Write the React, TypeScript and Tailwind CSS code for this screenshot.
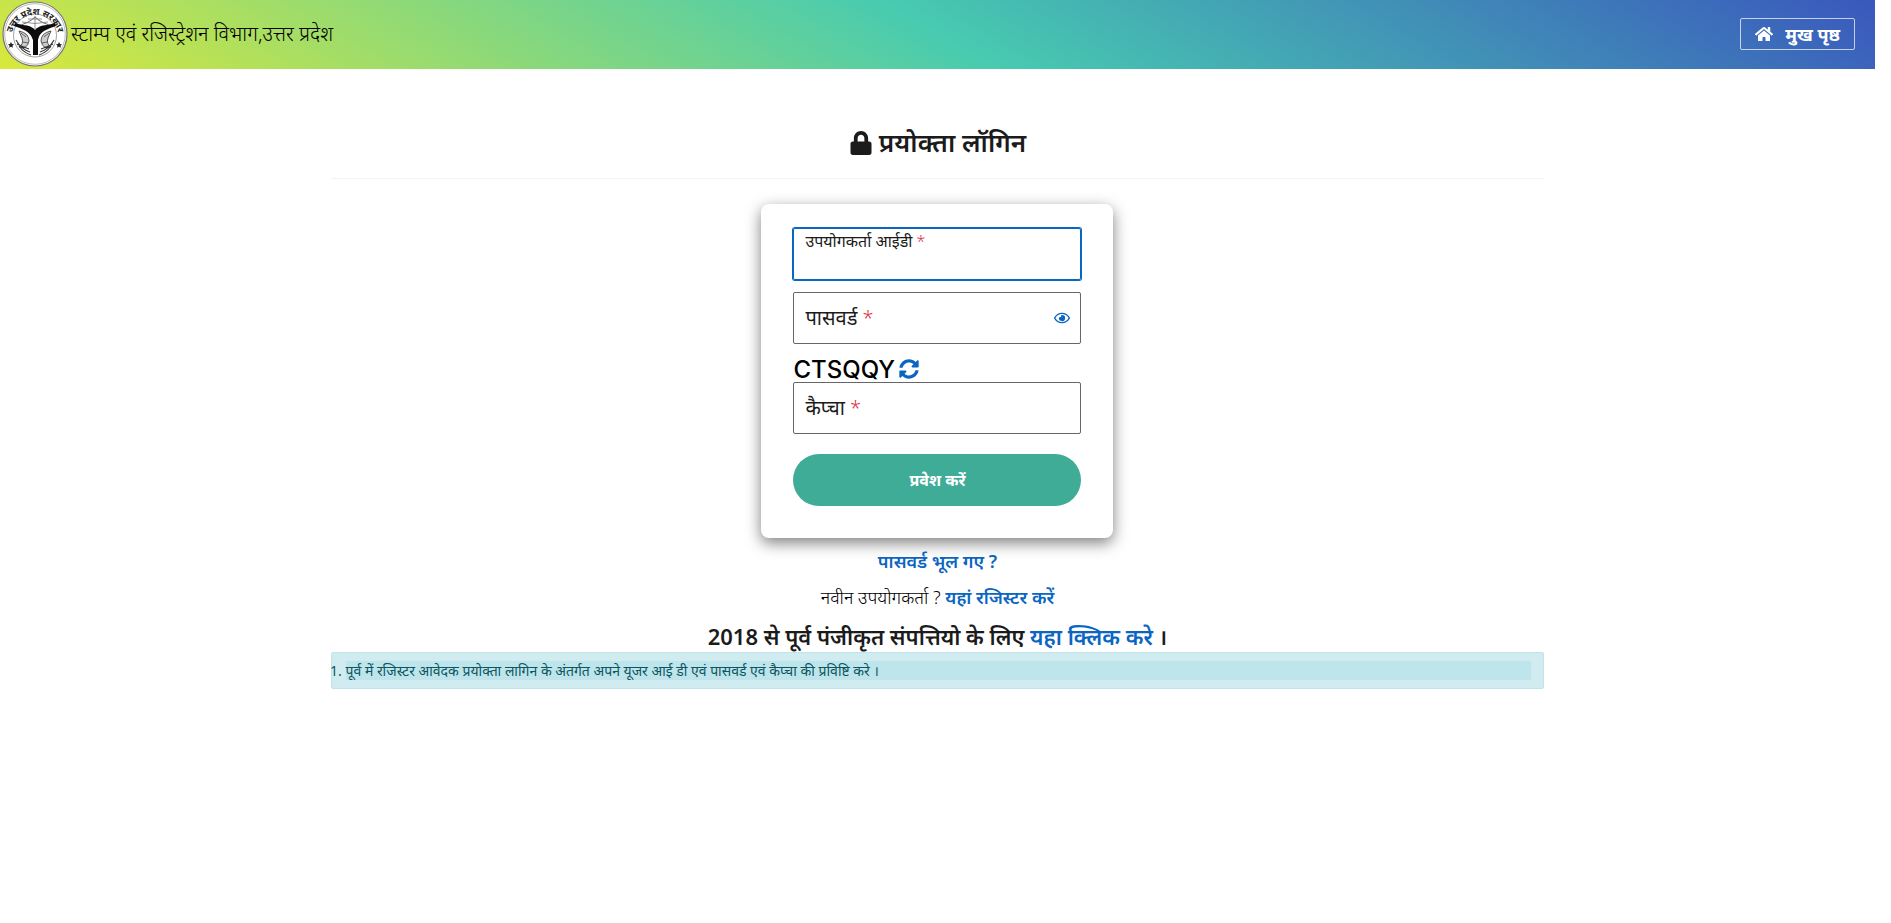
import { useState } from "react";
import { FaHome, FaLock, FaRegEye, FaSyncAlt } from "react-icons/fa";

function StateEmblem() {
  return (
    <svg viewBox="0 0 66 66" className="size-[66px] shrink-0" role="img" aria-label="उत्तर प्रदेश सरकार">
      <defs>
        <path id="ring" d="M10 42 A23.500 23.500 0 1 1 56 42" />
      </defs>
      <circle cx="33" cy="33" r="32" fill="#fff" stroke="#777" strokeWidth="1.2" />
      <circle cx="33" cy="33" r="30.3" fill="none" stroke="#aaa" strokeWidth="0.8" />
      <circle cx="33" cy="34.500" r="21.500" fill="#fff" stroke="#888" strokeWidth="0.8" />
      <text fontSize="9" fontWeight="700" fill="#222" textAnchor="middle">
        <textPath href="#ring" startOffset="50%">
          उत्तर प्रदेश सरकार
        </textPath>
      </text>
      {/* bow */}
      <path d="M14 25 Q26 23 33 16 Q40 23 52 25" fill="none" stroke="#555" strokeWidth="0.9" />
      <path d="M20 21 Q33 24 46 21 M33 15 V28 M26 18 H40" fill="none" stroke="#777" strokeWidth="0.8" />
      {/* rivers */}
      <path d="M13 22 Q19 24 25 24.500 Q31 26 33 29 Q35 26 41 24.500 Q47 24 53 22 L54 25 Q47 27 42 30 Q37 33 36 39 L36 54 H31 L31 39 Q29 33 24 30 Q19 27 12 25 Z" fill="#0c0c0c" />
      {/* fish */}
      <path d="M17 30 Q27 32 27 40 Q25 49 17 46 Q22 43 20 37 Z M49 30 Q39 32 39 40 Q41 49 49 46 Q44 43 46 37 Z" fill="#ccc" stroke="#444" strokeWidth="0.9" />
      <path d="M19 32 L24 36 M21 41 L26 42 M47 32 L42 36 M45 41 L40 42" fill="none" stroke="#555" strokeWidth="0.9" />
      <path d="M14 39 Q19 48 28 51 M52 39 Q47 48 38 51 M17 45 Q22 52 29 54 M49 45 Q44 52 37 54 M15 43 Q21 46 27 48 M51 43 Q45 46 39 48" fill="none" stroke="#333" strokeWidth="1.1" />
      <path d="M9 41 l1 2 2 .3 -1.500 1.400 .4 2 -1.900 -1 -1.900 1 .4 -2 -1.500 -1.400 2 -.3z M57 41 l1 2 2 .3 -1.500 1.400 .4 2 -1.900 -1 -1.900 1 .4 -2 -1.500 -1.400 2 -.3z" fill="#222" />
    </svg>
  );
}

function Required() {
  return <span className="font-light text-[#dc3545]">*</span>;
}

export default function App() {
  const [showPassword, setShowPassword] = useState(false);

  return (
    <div className="min-h-screen bg-white pr-4 font-['Noto_Sans','Open_Sans',sans-serif] text-[#1b1b1b]">
      <header className="flex h-[69px] items-center justify-between bg-linear-[30deg,#d9e83b,#48cbb0,#3a57bd] pr-5 pb-0.5 pl-0.5">
        <div className="flex items-center gap-[3px] text-xl font-light text-black">
          <StateEmblem />
          <span>स्टाम्प एवं रजिस्ट्रेशन विभाग,उत्तर प्रदेश</span>
        </div>
        <a
          href="#"
          className="flex h-8 items-center gap-3 rounded-xs border border-white/70 px-3.5 text-lg leading-6 font-bold text-white"
        >
          <FaHome />
          मुख पृष्ठ
        </a>
      </header>

      <main className="mx-auto flex w-2/3 flex-col items-center px-[18px] pt-12">
        <h1 className="flex h-[62px] w-full justify-center gap-1.5 border-b border-gray-100 pt-[5px] text-[26px] leading-10 font-semibold">
          <FaLock className="mt-[9px] size-6" />
          प्रयोक्ता लॉगिन
        </h1>

        <form className="mt-[25px] w-[352px] rounded-lg bg-white px-8 pt-6 pb-8 shadow-[0_5px_15px_rgba(0,0,0,0.5)]">
          <div className="relative">
            <input
              id="user"
              className="block h-[52px] w-full rounded-xs border border-[#0a66c2] px-3 pt-5 ring-1 ring-[#0a66c2] outline-none"
            />
            <label htmlFor="user" className="absolute top-px left-3 text-base leading-6">
              उपयोगकर्ता आईडी <Required />
            </label>
          </div>

          <div className="relative mt-3">
            <input
              id="password"
              type={showPassword ? "text" : "password"}
              className="block h-[52px] w-full rounded-xs border border-[#666] px-3 pt-5"
            />
            <label htmlFor="password" className="absolute top-3 left-3 text-xl">
              पासवर्ड <Required />
            </label>
            <button
              type="button"
              aria-label="पासवर्ड दिखाएं"
              onClick={() => setShowPassword(!showPassword)}
              className="absolute top-[18px] right-[11px] text-base text-[#0a66c2]"
            >
              <FaRegEye />
            </button>
          </div>

          <div className="flex h-[38px] items-end gap-1 font-['Inter','Liberation_Sans',sans-serif] text-2xl leading-6 font-medium text-black">
            <span>CTSQQY</span>
            <button type="button" aria-label="कैप्चा बदलें" className="pb-[3px] text-xl leading-5 text-[#0a66c2]">
              <FaSyncAlt />
            </button>
          </div>

          <div className="relative">
            <input id="captcha" className="block h-[52px] w-full rounded-xs border border-[#666] px-3 pt-5" />
            <label htmlFor="captcha" className="absolute top-3 left-3 text-xl">
              कैप्चा <Required />
            </label>
          </div>

          <button type="submit" className="mt-5 h-[52px] w-full rounded-full bg-[#3eac97] text-base font-bold text-white">
            प्रवेश करें
          </button>
        </form>

        <p className="mt-[11px] text-lg leading-6">
          <a href="#" className="font-semibold text-[#0a66c2]">
            पासवर्ड भूल गए ?
          </a>
        </p>
        <p className="mt-3 text-lg leading-6 font-light text-black">
          नवीन उपयोगकर्ता ?{" "}
          <a href="#" className="font-semibold text-[#0a66c2]">
            यहां रजिस्टर करें
          </a>
        </p>
        <h2 className="mt-[11px] text-[22px] leading-8 font-semibold">
          2018 से पूर्व पंजीकृत संपत्तियो के लिए{" "}
          <a href="#" className="text-[#0a66c2]">
            यहा क्लिक करे
          </a>{" "}
          ।
        </h2>
        <div className="w-full rounded-xs border border-[#bee5eb] bg-[#d1ecf1] py-2 pr-3 text-sm leading-[19px] text-[#0c5460]">
          <ol className="list-decimal pl-3.5">
            <li className="bg-[#bee5eb]">
              पूर्व में रजिस्टर आवेदक प्रयोक्ता लागिन के अंतर्गत अपने यूजर आई डी एवं पासवर्ड एवं कैप्चा की प्रविष्टि करे ।
            </li>
          </ol>
        </div>
      </main>
    </div>
  );
}
